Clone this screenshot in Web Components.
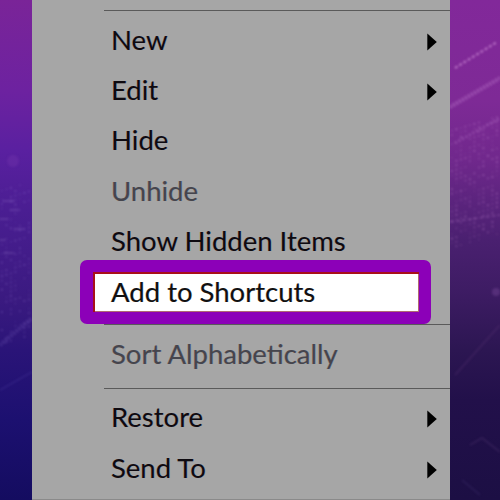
<!DOCTYPE html>
<html>
<head>
<meta charset="utf-8">
<style>
  html, body { margin: 0; padding: 0; height: 500px; overflow: hidden; }
  body { font-family: Lato, "Open Sans", sans-serif; }
</style>
</head>
<body>
<desk-top>
  <bg-strip slot="left" side="left"></bg-strip>
  <context-menu slot="menu">
    <menu-sep></menu-sep>
    <menu-item arrow>New</menu-item>
    <menu-item arrow>Edit</menu-item>
    <menu-item>Hide</menu-item>
    <menu-item disabled>Unhide</menu-item>
    <menu-item>Show Hidden Items</menu-item>
    <menu-item highlighted>Add to Shortcuts</menu-item>
    <menu-sep short></menu-sep>
    <menu-item disabled>Sort Alphabetically</menu-item>
    <menu-sep lower></menu-sep>
    <menu-item arrow>Restore</menu-item>
    <menu-item arrow>Send To</menu-item>
  </context-menu>
  <bg-strip slot="right" side="right"></bg-strip>
</desk-top>

<script>
class DeskTop extends HTMLElement {
  constructor() {
    super();
    this.attachShadow({ mode: "open" }).innerHTML = `
      <style>
        :host { display: grid; grid-template-columns: 32px 418px 50px; width: 500px; height: 500px; overflow: hidden; }
      </style>
      <slot name="left"></slot><slot name="menu"></slot><slot name="right"></slot>`;
  }
}

// small seeded random so the dots come out the same every time
function seeded(s) {
  return () => (s = (s * 16807) % 2147483647) / 2147483647;
}

class BgStrip extends HTMLElement {
  constructor() {
    super();
    this.attachShadow({ mode: "open" });
  }
  connectedCallback() {
    const left = this.getAttribute("side") === "left";
    const w = left ? 32 : 50;
    const rnd = seeded(left ? 77 : 1234);
    let dots = "";
    const field = left ? { y0: 190, y1: 345, c: "#a888e0", p: 0.45, o: 0.22 } : { y0: 130, y1: 250, c: "#c080cc", p: 0.6, o: 0.4 };
    for (let y = field.y0; y < field.y1; y += 4.5) {
      for (let x = 1; x < w; x += 4.5) {
        if (rnd() < field.p) {
          const o = (0.08 + rnd() * field.o).toFixed(2);
          dots += `<rect x="${x}" y="${y - x * 0.3}" width="1.8" height="1.8" fill="${field.c}" opacity="${o}"/>`;
        }
      }
    }
    const streaks = left
      ? `<path d="M3 201H14M10 210H20M0 219H8M14 229H26M4 253H14M0 240H5" stroke="#b89ae0" stroke-width="1.5" stroke-dasharray="2 1" opacity=".35"/>
         <circle cx="13" cy="161" r="6" fill="#7a3ab0" opacity=".3"/>
         <path d="M0 345L32 318" stroke="#9a80d8" stroke-width="4" stroke-dasharray="2 1.5" opacity=".24"/>
         <path d="M0 390L32 372" stroke="#8f7fe0" stroke-width="1.5" opacity=".14"/>`
      : `<path d="M5 68L47 42" stroke="#d99ae0" stroke-width="2.2" stroke-dasharray="3 2" opacity=".6"/>
         <path d="M0 107L50 78" stroke="#d090dc" stroke-width="4" stroke-dasharray="2 1.5" opacity=".42"/>
         <path d="M5 143L50 118" stroke="#d090dc" stroke-width="3" stroke-dasharray="2 2" opacity=".3"/>
         <path d="M0 222L50 215" stroke="#d090dc" stroke-width="1.5" stroke-dasharray="4 2" opacity=".3"/>
         <circle cx="46" cy="292" r="4" fill="#7a4a9a" opacity=".4"/>
         <path d="M5 375L50 325" stroke="#7a4a8a" stroke-width="2" opacity=".18"/>
         <path d="M20 445L32 438L50 452" stroke="#5a3a78" stroke-width="2" fill="none" opacity=".3"/>
         <path d="M12 480L30 495" stroke="#4a3a7a" stroke-width="1.5" opacity=".35"/>`;
    const bg = left
      ? "linear-gradient(180deg,#7a2498 0,#6d22a0 90px,#5a20a0 150px,#4a1e92 210px,#3a1a80 300px,#2a1478 350px,#1c1070 420px,#140c60 500px)"
      : "linear-gradient(180deg,#82289a 0,#7e2a96 100px,#70288c 160px,#5c247e 200px,#4a2070 240px,#3e1c64 290px,#2c1652 350px,#22104a 400px,#1c0f44 500px)";
    this.shadowRoot.innerHTML = `
      <style>
        :host { display: block; height: 500px; background: ${bg}; overflow: hidden; }
        svg { display: block; filter: blur(0.9px); }
      </style>
      <svg width="${w}" height="500" viewBox="0 0 ${w} 500">${dots}${streaks}</svg>`;
  }
}

class ContextMenu extends HTMLElement {
  constructor() {
    super();
    this.attachShadow({ mode: "open" }).innerHTML = `
      <style>
        :host { display: flex; flex-direction: column; height: 500px; box-sizing: border-box; background: #a6a6a6;
          padding-top: 10px; border-bottom: 1px solid #8a8a8a; }
      </style>
      <slot></slot>`;
  }
}

class MenuSep extends HTMLElement {
  constructor() {
    super();
    this.attachShadow({ mode: "open" }).innerHTML = `
      <style>
        :host { display: block; flex: none; height: 1px; margin: 0 0 4px 72px; background: #5a5a5a; }
        :host([short]) { margin: 12px 0 4px 72px; }
        :host([lower]) { margin: 8px 0 4px 72px; }
      </style>`;
  }
}

class MenuItem extends HTMLElement {
  constructor() {
    super();
    this.attachShadow({ mode: "open" }).innerHTML = `
      <style>
        :host { display: flex; flex: none; align-items: center; height: 50.3px; padding: 0 13px 0 79px; box-sizing: border-box;
          font-size: 27.5px; color: #0e0a10; position: relative;
          text-shadow: -0.5px 0 rgba(190,90,20,.3), 0.5px 0 rgba(20,110,190,.3); }
        :host([disabled]) { color: #45454d; }
        :host([highlighted]) { height: 40px; margin: 6px 31px 0 61px; padding-left: 18px; background: #fff; color: #111;
          box-shadow: inset 2px 2px 0 #a80f1a, inset -1px -1px 0 #b06a70; }
        .label { flex: 1; white-space: nowrap; margin-top: -2px; }
        svg { display: none; flex: none; margin-top: 3px; }
        :host([arrow]) svg { display: block; }
        .ring { display: none; position: absolute; inset: -12px; left: -13px; border: 12px solid #8c00b8; border-left-width: 13px; border-radius: 7px; pointer-events: none; }
        :host([highlighted]) .ring { display: block; }
      </style>
      <span class="label"><slot></slot></span>
      <svg width="10" height="18" viewBox="0 0 10 18"><path d="M0.3 0.5L9.8 9L0.3 17.5Z" fill="#000"/></svg>
      <div class="ring"></div>`;
  }
}

customElements.define("desk-top", DeskTop);
customElements.define("bg-strip", BgStrip);
customElements.define("context-menu", ContextMenu);
customElements.define("menu-sep", MenuSep);
customElements.define("menu-item", MenuItem);
</script>
</body>
</html>
